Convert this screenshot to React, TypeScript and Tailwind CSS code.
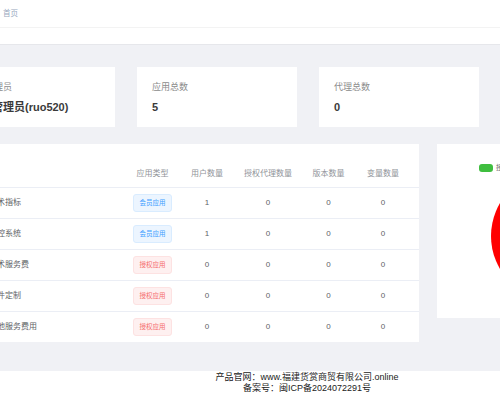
import React from 'react';

type Row = { name: string; type: 'member' | 'auth'; users: number; agents: number; versions: number; vars: number };

const rows: Row[] = [
  { name: '技术指标', type: 'member', users: 1, agents: 0, versions: 0, vars: 0 },
  { name: '监控系统', type: 'member', users: 1, agents: 0, versions: 0, vars: 0 },
  { name: '技术服务费', type: 'auth', users: 0, agents: 0, versions: 0, vars: 0 },
  { name: '软件定制', type: 'auth', users: 0, agents: 0, versions: 0, vars: 0 },
  { name: '其他服务费用', type: 'auth', users: 0, agents: 0, versions: 0, vars: 0 },
];

const stats = [
  { label: '当前管理员', value: '超级管理员(ruo520)' },
  { label: '应用总数', value: '5' },
  { label: '代理总数', value: '0' },
];

const cols = 'grid grid-cols-[146px_55px_54px_68px_53px_56px] items-center';

const Tag: React.FC<{ type: Row['type'] }> = ({ type }) =>
  type === 'member' ? (
    <span className="inline-flex items-center justify-center w-[39px] h-[18px] rounded-[3px] border border-[#d9ecff] bg-[#ecf5ff] text-[#409eff] text-[6.5px]">
      会员应用
    </span>
  ) : (
    <span className="inline-flex items-center justify-center w-[39px] h-[18px] rounded-[3px] border border-[#fde2e2] bg-[#fef0f0] text-[#f56c6c] text-[6.5px]">
      授权应用
    </span>
  );

export default function App() {
  return (
    <div
      className="w-[500px] h-[400px] overflow-hidden bg-white"
      style={{ fontFamily: '"Liberation Sans", "Noto Sans CJK SC", sans-serif' }}
    >
      <div className="-ml-[86px] w-[786px]">
        {/* navbar */}
        <div className="h-[28px] border-b border-[#f3f3f3] flex items-center pl-[89px]">
          <span className="text-[7.5px] text-[#97a8be]">首页</span>
        </div>
        {/* tags bar */}
        <div className="h-[17px] border-b border-[#e6e7eb] bg-white"></div>

        {/* main */}
        <div className="bg-[#f0f1f5] pl-[41px] pt-[22px] pb-[29px]">
          <div className="flex gap-[22px]">
            {stats.map((s, i) => (
              <div key={s.label} className="w-[160px] h-[60px] bg-white pl-[15px] pt-[14px] shrink-0">
                <div className={`text-[9px] leading-[12px] text-[#8c8c8c] ${i === 0 ? '-ml-[3px]' : ''}`}>{s.label}</div>
                <div className="mt-[7px] text-[11px] leading-[14px] font-bold text-[#3a3a3a]">{s.value}</div>
              </div>
            ))}
          </div>

          <div className="flex items-start gap-[18px] mt-[17px]">
            {/* table panel */}
            <div className="w-[464px] shrink-0 bg-white pt-[16px] pl-[24px]">
              <div className={`${cols} h-[27px] text-[8px] text-[#909399]`}>
                <div></div>
                <div className="text-center">应用类型</div>
                <div className="text-center">用户数量</div>
                <div className="text-center">授权代理数量</div>
                <div className="text-center">版本数量</div>
                <div className="text-center">变量数量</div>
              </div>
              {rows.map((r) => (
                <div key={r.name} className={`${cols} h-[31px] border-t border-[#ebeef5] text-[8px] text-[#606266]`}>
                  <div className="pl-[10px] whitespace-nowrap">{r.name}</div>
                  <div className="flex justify-center">
                    <Tag type={r.type} />
                  </div>
                  <div className="text-center">{r.users}</div>
                  <div className="text-center">{r.agents}</div>
                  <div className="text-center">{r.versions}</div>
                  <div className="text-center">{r.vars}</div>
                </div>
              ))}
            </div>

            {/* chart panel */}
            <div className="relative w-[238px] h-[174px] shrink-0 bg-white">
              <div className="absolute left-[42px] top-[20px] flex items-center gap-[3px]">
                <span className="w-[14px] h-[8px] rounded-[3px] bg-[#3fbe3f]"></span>
                <span className="text-[7px] leading-[8px] text-[#666]">授权应用</span>
              </div>
              <svg width="238" height="174" viewBox="0 0 238 174">
                <circle cx="119" cy="92" r="65" fill="#ff0000" />
              </svg>
            </div>
          </div>
        </div>

        {/* footer */}
        <div className="pt-[1px] text-center text-[9px] leading-[11px] text-[#222]">
          <div>产品官网：www.福建货赏商贸有限公司.online</div>
          <div>备案号：闽ICP备2024072291号</div>
        </div>
      </div>
    </div>
  );
}
